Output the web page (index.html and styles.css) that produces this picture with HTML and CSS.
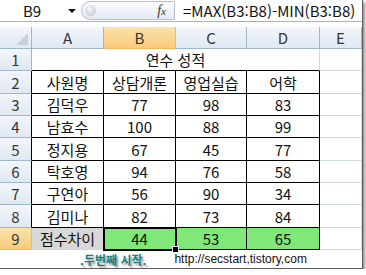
FILE: index.html
```html
<!DOCTYPE html>
<html lang="ko">
<head>
    <meta charset="UTF-8">
    <title>연수 성적</title>
    <link rel="stylesheet" href="styles.css">
</head>
<body>
    <div class="frame">
        <!-- Formula bar -->
        <div class="fbar">
            <div class="namebox">
                <span class="cellref">B9</span>
                <span class="arrow"></span>
            </div>
            <div class="pill">
                <span class="knob"></span>
                <span class="fx">f<small>x</small></span>
            </div>
            <div class="formula">=MAX(B3:B8)-MIN(B3:B8)</div>
        </div>

        <!-- Sheet -->
        <div class="sheet">
            <div class="c h corner"><span class="tri"></span></div>
            <div class="c h">A</div>
            <div class="c h sel">B</div>
            <div class="c h">C</div>
            <div class="c h">D</div>
            <div class="c h">E</div>

            <div class="c rh">1</div>
            <div class="c title">연수 성적</div>
            <div class="c"></div>

            <div class="c rh edge">2</div>
            <div class="c b">사원명</div>
            <div class="c b">상담개론</div>
            <div class="c b">영업실습</div>
            <div class="c b">어학</div>
            <div class="c"></div>

            <div class="c rh edge">3</div>
            <div class="c b">김덕우</div>
            <div class="c b">77</div>
            <div class="c b">98</div>
            <div class="c b">83</div>
            <div class="c"></div>

            <div class="c rh edge">4</div>
            <div class="c b">남효수</div>
            <div class="c b">100</div>
            <div class="c b">88</div>
            <div class="c b">99</div>
            <div class="c"></div>

            <div class="c rh edge">5</div>
            <div class="c b">정지용</div>
            <div class="c b">67</div>
            <div class="c b">45</div>
            <div class="c b">77</div>
            <div class="c"></div>

            <div class="c rh edge">6</div>
            <div class="c b">탁호영</div>
            <div class="c b">94</div>
            <div class="c b">76</div>
            <div class="c b">58</div>
            <div class="c"></div>

            <div class="c rh edge">7</div>
            <div class="c b">구연아</div>
            <div class="c b">56</div>
            <div class="c b">90</div>
            <div class="c b">34</div>
            <div class="c"></div>

            <div class="c rh edge">8</div>
            <div class="c b">김미나</div>
            <div class="c b">82</div>
            <div class="c b">73</div>
            <div class="c b">84</div>
            <div class="c"></div>

            <div class="c rh sel">9</div>
            <div class="c grey">점수차이</div>
            <div class="c b green active">44<span class="handle"></span></div>
            <div class="c b green">53</div>
            <div class="c b green">65</div>
            <div class="c"></div>
        </div>

        <div class="caption">
            <span class="mark">.두번째 시작.</span>
            <span class="url">http://secstart,tistory,com</span>
        </div>
    </div>
</body>
</html>
```

FILE: styles.css
```css
body {
    margin: 0;
    background: #fff;
    font-family: "Noto Sans CJK KR", "Noto Sans", sans-serif;
    color: #111;
}

.frame {
    width: 362px;
    height: 268px;
    background: #fff;
    border-right: 1px solid #5e5e5e;
    border-bottom: 1px solid #5e5e5e;
    box-shadow: 2px 2px 3px rgba(0,0,0,0.45);
    overflow: hidden;
}

/* Formula bar */
.fbar {
    display: flex;
    align-items: center;
    height: 21px;
    border-bottom: 1px solid #a7b4c6;
    margin-bottom: 5px;
}

.namebox {
    display: flex;
    align-items: center;
    width: 81px;
    font-size: 15px;
}

.cellref {
    margin-left: 23px;
    width: 44px;
}

.arrow {
    width: 0;
    height: 0;
    border-left: 4px solid transparent;
    border-right: 4px solid transparent;
    border-top: 4px solid #111;
    margin-left: 1px;
}

.pill {
    display: flex;
    align-items: center;
    justify-content: space-between;
    width: 94px;
    height: 19px;
    box-sizing: border-box;
    border: 1px solid #aebdd0;
    border-radius: 10px 0 0 10px;
    background: linear-gradient(#fbfcfe, #e4eaf2);
    padding: 0 8px 0 3px;
}

.knob {
    width: 11px;
    height: 11px;
    border-radius: 50%;
    background: radial-gradient(circle at 40% 35%, #f4f6f9, #b9c2ce);
}

.fx {
    font-family: "Liberation Serif", serif;
    font-style: italic;
    font-size: 14px;
    color: #333;
}

.fx small {
    font-size: 11px;
}

.formula {
    margin-left: 8px;
    font-size: 15px;
    white-space: nowrap;
}

/* Sheet grid */
.sheet {
    display: grid;
    grid-template-columns: 32px 72px 72px 71px 73px 42px;
    grid-template-rows: 22px 22px 23px 22px 22px 23px 22px 22px 23px 22px;
}

.c {
    display: flex;
    align-items: center;
    justify-content: center;
    box-sizing: border-box;
    border-right: 1px solid #d0d7e5;
    border-bottom: 1px solid #d0d7e5;
    font-size: 15px;
    white-space: nowrap;
}

.h, .rh {
    background: linear-gradient(#f3f6fb, #e0e8f3);
    border-right-color: #9eb6ce;
    border-bottom-color: #9eb6ce;
    color: #333;
}

.h.sel, .rh.sel {
    background: linear-gradient(#fce2ac, #f8cb7b);
    border-right-color: #f0b760;
    border-bottom-color: #f0b760;
}

.corner {
    position: relative;
}

.tri {
    position: absolute;
    right: 3px;
    bottom: 3px;
    width: 0;
    height: 0;
    border-left: 12px solid transparent;
    border-bottom: 12px solid #c6d0dc;
}

.rh.edge {
    border-right-color: #000;
}

.title {
    grid-column: span 4;
    border-right-color: #d0d7e5;
    border-bottom-color: #000;
}

.b {
    border-right-color: #000;
    border-bottom-color: #000;
}

.grey {
    background: #d8d8d8;
}

.green {
    background: #80e878;
}

.active {
    position: relative;
    outline: 2px solid #000;
    outline-offset: -1px;
    z-index: 1;
}

.handle {
    position: absolute;
    right: -4px;
    bottom: -4px;
    width: 5px;
    height: 5px;
    background: #000;
    border: 1px solid #fff;
}

/* Caption under the table */
.caption {
    display: flex;
    align-items: center;
    height: 18px;
    padding-left: 80px;
}

.mark {
    font-size: 12px;
    font-weight: bold;
    color: #16807e;
    text-shadow: 2px 2px 2px #9a9a9a;
}

.url {
    margin-left: 28px;
    font-family: "Liberation Sans", sans-serif;
    font-size: 12px;
    color: #111;
}
```
